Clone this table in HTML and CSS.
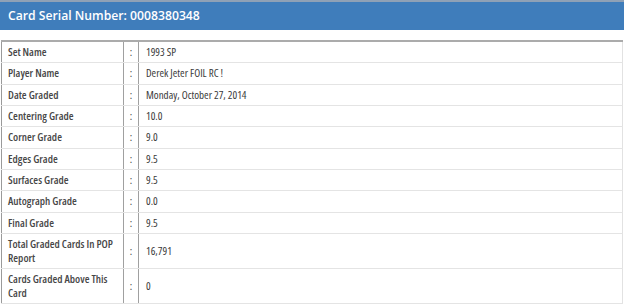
FILE: index.html
```html
<!DOCTYPE html>
<html lang="en">
<head>
<meta charset="utf-8">
<title>Card Serial Number</title>
<link rel="stylesheet" href="styles.css">
</head>
<body>
<div class="topstrip"></div>
<div class="header">Card Serial Number: 0008380348</div>
<table class="details">
  <colgroup>
    <col class="c-label">
    <col class="c-sep">
    <col class="c-value">
  </colgroup>
  <tbody>
    <tr><td class="label">Set Name</td><td class="sep">:</td><td class="value">1993 SP</td></tr>
    <tr><td class="label">Player Name</td><td class="sep">:</td><td class="value">Derek Jeter FOIL RC !</td></tr>
    <tr><td class="label">Date Graded</td><td class="sep">:</td><td class="value">Monday, October 27, 2014</td></tr>
    <tr><td class="label">Centering Grade</td><td class="sep">:</td><td class="value">10.0</td></tr>
    <tr><td class="label">Corner Grade</td><td class="sep">:</td><td class="value">9.0</td></tr>
    <tr><td class="label">Edges Grade</td><td class="sep">:</td><td class="value">9.5</td></tr>
    <tr><td class="label">Surfaces Grade</td><td class="sep">:</td><td class="value">9.5</td></tr>
    <tr><td class="label">Autograph Grade</td><td class="sep">:</td><td class="value">0.0</td></tr>
    <tr><td class="label">Final Grade</td><td class="sep">:</td><td class="value">9.5</td></tr>
    <tr><td class="label">Total Graded Cards In POP Report</td><td class="sep">:</td><td class="value">16,791</td></tr>
    <tr><td class="label">Cards Graded Above This Card</td><td class="sep">:</td><td class="value">0</td></tr>
  </tbody>
</table>
</body>
</html>
```
FILE: styles.css
```css
html, body {
  margin: 0;
  padding: 0;
  background: #ffffff;
}
body {
  font-family: "Open Sans", "Noto Sans", sans-serif;
  color: #333333;
  width: 624px;
  overflow: hidden;
}
.topstrip {
  height: 2px;
  background: #8fa1b6;
}
.header {
  height: 28px;
  background: #3f7dbb;
  color: #ffffff;
  font-size: 12.2px;
  line-height: 28px;
  padding-left: 8px;
  font-weight: 600;
}
.details {
  margin: 10px 0 0 1px;
  width: 622px;
  border-collapse: collapse;
  table-layout: fixed;
  border-top: 2px solid #ababab;
  border-left: 1px solid #9a9a9a;
  border-right: 1px solid #e2e2e2;
  font-size: 11px;
  font-stretch: 75%;
}
.c-label { width: 122px; }
.c-sep { width: 15px; }
.details td {
  border-bottom: 1px solid #e4e4e4;
  padding: 3.16px 6px;
  line-height: 14px;
  vertical-align: middle;
}
.details td.label {
  color: #474747;
  font-weight: 600;
  padding-left: 6px;
  padding-right: 4px;
}
.details td.sep {
  border-left: 1px solid #a0a0a0;
  border-right: 1px solid #a0a0a0;
  text-align: center;
  padding: 3.16px 0;
}
.details td.value {
  color: #3a3a3a;
  padding-left: 7px;
}
```
